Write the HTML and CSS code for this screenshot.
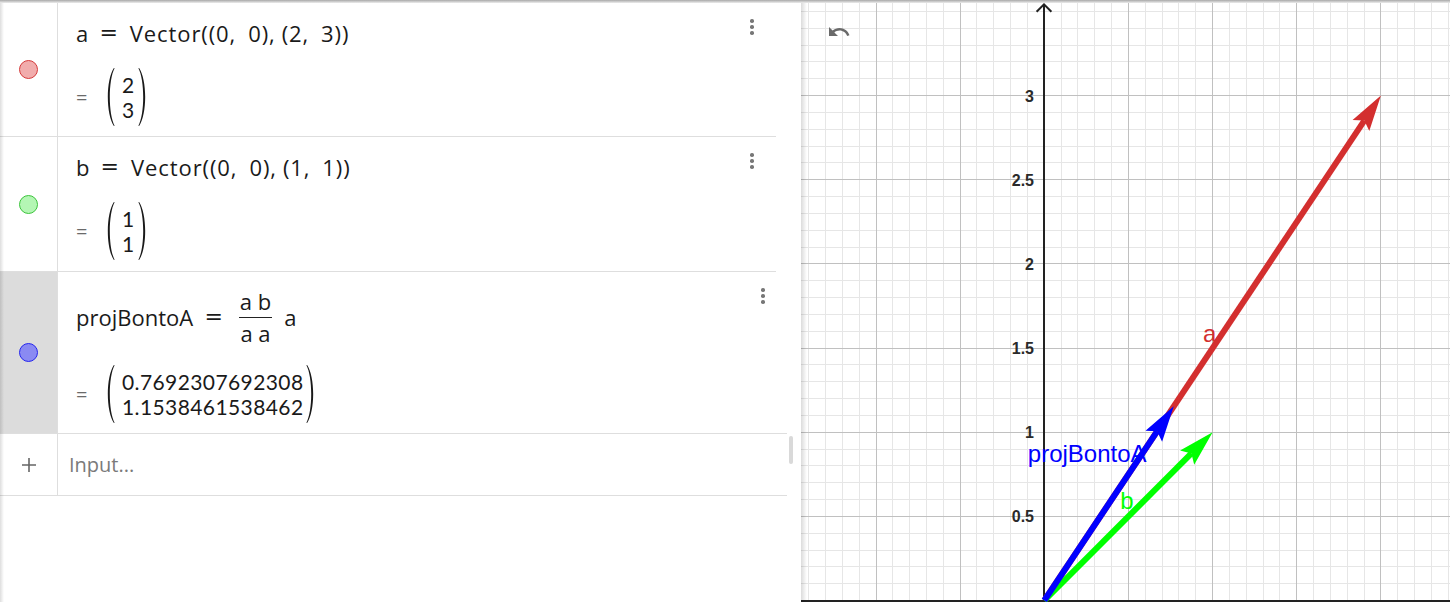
FILE: index.html
```html
<!DOCTYPE html>
<html lang="en">
<head>
<meta charset="utf-8">
<title>GeoGebra – vectors</title>
<link rel="stylesheet" href="styles.css">
</head>
<body>
<div class="topbar"></div>
<div class="app">
  <div class="algebra">
    <div class="row r1">
      <div class="marble-col"><span class="marble red"></span></div>
      <div class="content">
        <div class="def"><span>a</span><span class="eq">=</span><span class="call">Vector((0,<span class="sp"></span>0),<span class="thin"></span>(2,<span class="sp"></span>3))</span></div>
        <div class="val">
          <span class="veq">=</span>
          <span class="matrix">
            <svg class="paren" viewBox="0 0 10 58" width="8" height="58" preserveAspectRatio="none"><path d="M9.5 0.3 C1.5 12 1.5 46 9.5 57.7 L8.6 58 C-1.5 46 -1.5 12 8.6 0 Z"/></svg>
            <span class="cells"><span>2</span><span>3</span></span>
            <svg class="paren" viewBox="0 0 10 58" width="8" height="58" preserveAspectRatio="none"><path d="M0.5 0.3 C8.5 12 8.5 46 0.5 57.7 L1.4 58 C11.5 46 11.5 12 1.4 0 Z"/></svg>
          </span>
        </div>
      </div>
      <div class="menu"><i></i><i></i><i></i></div>
    </div>
    <div class="row r2">
      <div class="marble-col"><span class="marble green"></span></div>
      <div class="content">
        <div class="def"><span>b</span><span class="eq">=</span><span class="call">Vector((0,<span class="sp"></span>0),<span class="thin"></span>(1,<span class="sp"></span>1))</span></div>
        <div class="val">
          <span class="veq">=</span>
          <span class="matrix">
            <svg class="paren" viewBox="0 0 10 58" width="8" height="58" preserveAspectRatio="none"><path d="M9.5 0.3 C1.5 12 1.5 46 9.5 57.7 L8.6 58 C-1.5 46 -1.5 12 8.6 0 Z"/></svg>
            <span class="cells"><span>1</span><span>1</span></span>
            <svg class="paren" viewBox="0 0 10 58" width="8" height="58" preserveAspectRatio="none"><path d="M0.5 0.3 C8.5 12 8.5 46 0.5 57.7 L1.4 58 C11.5 46 11.5 12 1.4 0 Z"/></svg>
          </span>
        </div>
      </div>
      <div class="menu"><i></i><i></i><i></i></div>
    </div>
    <div class="row r3">
      <div class="marble-col selected"><span class="marble blue"></span></div>
      <div class="content c3">
        <div class="def">
          <span>projBontoA</span><span class="eq">=</span>
          <span class="frac"><span class="num">a b</span><span class="bar"></span><span class="den">a a</span></span>
          <span class="after">a</span>
        </div>
        <div class="val">
          <span class="veq">=</span>
          <span class="matrix">
            <svg class="paren" viewBox="0 0 10 58" width="8" height="58" preserveAspectRatio="none"><path d="M9.5 0.3 C1.5 12 1.5 46 9.5 57.7 L8.6 58 C-1.5 46 -1.5 12 8.6 0 Z"/></svg>
            <span class="cells"><span>0.7692307692308</span><span>1.1538461538462</span></span>
            <svg class="paren" viewBox="0 0 10 58" width="8" height="58" preserveAspectRatio="none"><path d="M0.5 0.3 C8.5 12 8.5 46 0.5 57.7 L1.4 58 C11.5 46 11.5 12 1.4 0 Z"/></svg>
          </span>
        </div>
      </div>
      <div class="menu"><i></i><i></i><i></i></div>
    </div>
    <div class="row input-row">
      <div class="marble-col">
        <svg width="16" height="16" viewBox="0 0 16 16"><path d="M8 1V15M1 8H15" stroke="#666" stroke-width="1.6"/></svg>
      </div>
      <div class="input-text">Input...</div>
    </div>
    <div class="scroll-thumb"></div>
  </div>
  <div class="graphics">
    <svg class="plot" width="649" height="599" viewBox="0 0 649 599">
      <defs>
        <linearGradient id="sh" x1="0" y1="0" x2="1" y2="0">
          <stop offset="0" stop-color="#000" stop-opacity="0.14"/>
          <stop offset="1" stop-color="#000" stop-opacity="0"/>
        </linearGradient>
      </defs>
      <path class="minor" d="M7.5 0V599M24.5 0V599M41.5 0V599M58.5 0V599M91.5 0V599M108.5 0V599M125.5 0V599M142.5 0V599M175.5 0V599M192.5 0V599M209.5 0V599M226.5 0V599M260.5 0V599M276.5 0V599M293.5 0V599M310.5 0V599M344.5 0V599M361.5 0V599M377.5 0V599M394.5 0V599M428.5 0V599M445.5 0V599M462.5 0V599M478.5 0V599M512.5 0V599M529.5 0V599M546.5 0V599M563.5 0V599M596.5 0V599M613.5 0V599M630.5 0V599M647.5 0V599M0 8.5H649M0 25.5H649M0 42.5H649M0 58.5H649M0 75.5H649M0 109.5H649M0 126.5H649M0 143.5H649M0 159.5H649M0 193.5H649M0 210.5H649M0 227.5H649M0 244.5H649M0 277.5H649M0 294.5H649M0 311.5H649M0 328.5H649M0 361.5H649M0 378.5H649M0 395.5H649M0 412.5H649M0 446.5H649M0 462.5H649M0 479.5H649M0 496.5H649M0 530.5H649M0 547.5H649M0 563.5H649M0 580.5H649"/>
      <path class="major" d="M75.5 0V599M159.5 0V599M327.5 0V599M411.5 0V599M495.5 0V599M579.5 0V599M0 92.5H649M0 176.5H649M0 260.5H649M0 345.5H649M0 429.5H649M0 513.5H649"/>
      <path class="axis" d="M243 1.5V599M0 598H649"/>
      <path class="axis-arrow" d="M235.6 8.8L243 1.4L250.4 8.8"/>
      <g class="ticks">
        <text x="233" y="98.6">3</text>
        <text x="233" y="182.8">2.5</text>
        <text x="233" y="266.9">2</text>
        <text x="233" y="351">1.5</text>
        <text x="233" y="435.2">1</text>
        <text x="233" y="519.4">0.5</text>
      </g>
      <g class="vec-a">
        <line x1="243.3" y1="597.5" x2="563.3" y2="117.6"/>
        <polygon points="579.9,92.6 568.3,128.1 563.3,117.6 551.6,117.0"/>
      </g>
      <g class="vec-b">
        <line x1="243.3" y1="597.5" x2="390.4" y2="450.4"/>
        <polygon points="411.6,429.2 393.2,461.7 390.4,450.4 379.1,447.6"/>
      </g>
      <g class="vec-p">
        <line x1="243.3" y1="597.5" x2="356.1" y2="428.3"/>
        <polygon points="372.8,403.3 361.1,438.8 356.1,428.3 344.5,427.7"/>
      </g>
      <text class="lbl lbl-a" x="402" y="338.7">a</text>
      <text class="lbl lbl-b" x="319.2" y="506.3">b</text>
      <text class="lbl lbl-p" x="226.8" y="459">projBontoA</text>
      <path class="undo" transform="translate(26 17)" d="M12.5 8c-2.65 0-5.050.99-6.9 2.6L2 7v9h9l-3.62-3.62c1.39-1.16 3.16-1.88 5.12-1.88 3.54 0 6.55 2.31 7.6 5.5l2.37-.78C21.08 11.03 17.15 8 12.5 8z"/>
      <rect x="0" y="0" width="6" height="599" fill="url(#sh)"/>
    </svg>
  </div>
</div>
</body>
</html>
```
FILE: styles.css
```css
html, body {
  margin: 0;
  padding: 0;
}
body {
  width: 1450px;
  height: 602px;
  overflow: hidden;
  background: #fff;
  font-family: "Open Sans", Lato, sans-serif;
  color: #1a1a1a;
}
.topbar {
  height: 3px;
  background: linear-gradient(#a8a8a8, #d2d2d2 60%, #ececec);
}
.app {
  display: flex;
  height: 599px;
}
.algebra {
  position: relative;
  width: 801px;
  flex: none;
  background: #fff;
}
.algebra::before {
  content: "";
  position: absolute;
  left: 0;
  top: 0;
  bottom: 0;
  width: 4px;
  background: linear-gradient(to right, rgba(0,0,0,0.13), rgba(0,0,0,0));
  pointer-events: none;
  z-index: 2;
}
.row {
  display: flex;
  box-sizing: border-box;
  border-bottom: 1px solid #dedede;
}
.r1 { width: 776px; height: 134px; }
.r2 { width: 776px; height: 135px; }
.r3 { width: 787px; height: 162px; }
.input-row { width: 787px; height: 62px; }

.marble-col {
  flex: none;
  box-sizing: border-box;
  width: 58px;
  border-right: 1px solid #dedede;
  display: flex;
  align-items: center;
  justify-content: center;
}
.marble-col.selected {
  background: #dcdcdc;
}
.marble {
  display: block;
  box-sizing: border-box;
  width: 19px;
  height: 19px;
  border-radius: 50%;
  border: 1px solid;
}
.marble.red { background: #f1acac; border-color: #d53a3a; }
.marble.green { background: #b4f6b4; border-color: #3cc43c; }
.marble.blue { background: #8a8af2; border-color: #2626ee; }

.content {
  flex: 1;
  padding: 16px 0 0 18px;
  font-size: 22px;
}
.content.c3 {
  padding-top: 18px;
}
.def {
  display: flex;
  align-items: center;
  height: 28px;
  line-height: 28px;
  white-space: pre;
}
.c3 .def {
  height: 54px;
}
.eq {
  font-family: "DejaVu Sans", sans-serif;
  font-size: 21px;
  margin: 0 12px 0 12px;
  transform: scaleX(1.05);
}
.call {
  letter-spacing: 0.9px;
}
.sp { display: inline-block; width: 12px; }
.thin { display: inline-block; width: 6px; }

.frac {
  display: flex;
  flex-direction: column;
  align-items: center;
  margin-left: 4px;
}
.num, .den {
  line-height: 22px;
  padding: 0 1px;
}
.num { padding-bottom: 5px; }
.den { padding-top: 4px; }
.bar {
  align-self: stretch;
  height: 1px;
  background: #222;
}
.after {
  margin-left: 12px;
}

.val {
  display: flex;
  align-items: center;
  margin-top: 21px;
  height: 58px;
}
.veq {
  font-size: 20px;
  color: #6a6a6a;
  width: 31px;
}
.matrix {
  display: flex;
  align-items: center;
}
.paren {
  display: block;
  fill: #1a1a1a;
}
.cells {
  display: flex;
  flex-direction: column;
  align-items: center;
  font-family: Lato, "Open Sans", sans-serif;
  font-size: 21px;
  letter-spacing: 0.4px;
  line-height: 25.5px;
  padding: 0 3px 0 7px;
}

.menu {
  flex: none;
  width: 48px;
  padding-top: 16px;
  display: flex;
  flex-direction: column;
  align-items: center;
  gap: 2.5px;
}
.menu i {
  display: block;
  width: 3.5px;
  height: 3.5px;
  border-radius: 50%;
  background: #777;
}

.input-text {
  align-self: center;
  padding-left: 11px;
  font-size: 20px;
  color: #7a7a7a;
}
.scroll-thumb {
  position: absolute;
  left: 789px;
  top: 433px;
  width: 4px;
  height: 28px;
  border-radius: 2px;
  background: #d9d9d9;
}

.graphics {
  flex: 1;
  position: relative;
  overflow: hidden;
}
.plot {
  display: block;
}
.minor {
  stroke: #e6e6e6;
  stroke-width: 1;
  fill: none;
}
.major {
  stroke: #c0c0c0;
  stroke-width: 1;
  fill: none;
}
.axis {
  stroke: #222;
  stroke-width: 2;
  fill: none;
}
.axis-arrow {
  stroke: #222;
  stroke-width: 2;
  fill: none;
}
.ticks text {
  font-family: "Liberation Sans", Arial, sans-serif;
  font-weight: bold;
  font-size: 16px;
  fill: #2a2a2a;
  text-anchor: end;
}
.vec-a line { stroke: #d32f2f; stroke-width: 6; }
.vec-a polygon { fill: #d32f2f; }
.vec-b line { stroke: #00ff00; stroke-width: 6; }
.vec-b polygon { fill: #00ff00; }
.vec-p line { stroke: #0000ff; stroke-width: 6; }
.vec-p polygon { fill: #0000ff; }
.lbl {
  font-family: "Liberation Sans", Arial, sans-serif;
  font-size: 24px;
}
.lbl-a { fill: #d32f2f; }
.lbl-b { fill: #00ff00; }
.lbl-p { fill: #0000ff; }
.undo {
  fill: #6a6a6a;
}
```
